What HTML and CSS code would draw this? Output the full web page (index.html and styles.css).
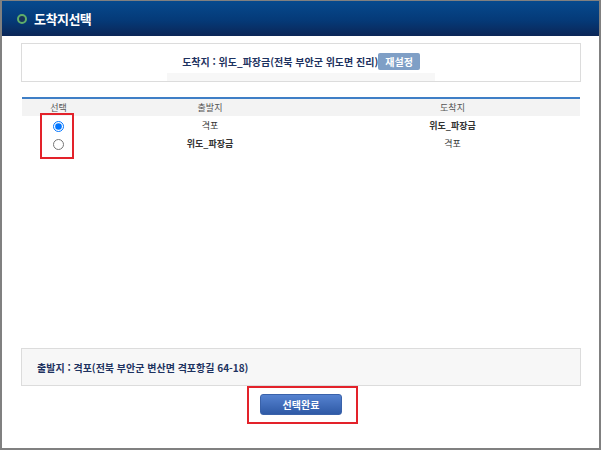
FILE: index.html
```html
<!DOCTYPE html>
<html lang="ko">
<head>
    <meta charset="UTF-8">
    <title>도착지선택</title>
    <link rel="stylesheet" href="styles.css">
</head>
<body>
    <div class="window">
        <div class="header">
            <span class="header-icon"></span>
            <h1>도착지선택</h1>
        </div>
        <div class="content">
            <div class="dest-box">
                <div class="dest-line">
                    <span class="dest-text">도착지 : 위도_파장금(전북 부안군 위도면 진리)</span>
                    <button class="btn-reset" type="button">재설정</button>
                </div>
                <div class="dest-strip"></div>
            </div>

            <div class="list">
                <table class="route-table">
                    <colgroup>
                        <col class="col-check">
                        <col class="col-from">
                        <col class="col-to">
                    </colgroup>
                    <thead>
                        <tr>
                            <th>선택</th>
                            <th>출발지</th>
                            <th>도착지</th>
                        </tr>
                    </thead>
                    <tbody>
                        <tr>
                            <td><input type="radio" name="route" checked></td>
                            <td>격포</td>
                            <td class="strong">위도_파장금</td>
                        </tr>
                        <tr>
                            <td><input type="radio" name="route"></td>
                            <td class="strong">위도_파장금</td>
                            <td>격포</td>
                        </tr>
                    </tbody>
                </table>
                <div class="mark mark-radio"></div>
            </div>

            <div class="start-box">출발지 : 격포(전북 부안군 변산면 격포항길 64-18)</div>

            <div class="actions">
                <button class="btn-done" type="button">선택완료</button>
                <div class="mark mark-done"></div>
            </div>
        </div>
    </div>
</body>
</html>
```

FILE: styles.css
```css
body {
    margin: 0;
    padding: 0;
    font-family: "Noto Sans CJK KR", "Noto Sans", sans-serif;
    color: #333;
}
.window {
    width: 601px;
    height: 450px;
    box-sizing: border-box;
    border: 2px solid #808080;
    border-top-width: 1px;
    background-color: #fff;
}
.header {
    height: 35px;
    display: flex;
    align-items: center;
    padding-left: 15px;
    background: linear-gradient(to bottom, #064a8e 0%, #053a78 55%, #0b2657 100%);
}
.header-icon {
    width: 6px;
    height: 6px;
    border: 2px solid #5fae6a;
    border-radius: 50%;
    background-color: #17345a;
}
.header h1 {
    margin: 0 0 0 7px;
    font-size: 13px;
    font-weight: bold;
    color: #fff;
    letter-spacing: -0.5px;
}
.content {
    padding: 7px 18px 0 19px;
}
.dest-box {
    height: 37px;
    border: 1px solid #dcdcdc;
    display: flex;
    flex-direction: column;
    align-items: center;
}
.dest-line {
    display: flex;
    align-items: center;
    margin-top: 9px;
}
.dest-text {
    font-size: 10px;
    font-weight: bold;
    color: #1d3260;
}
.btn-reset {
    height: 17px;
    padding: 0 7px;
    border: none;
    border-radius: 2px;
    background-color: #7f9fc6;
    color: #fff;
    font-family: inherit;
    font-size: 10px;
    font-weight: bold;
}
.dest-strip {
    margin-top: 3px;
    width: 268px;
    height: 8px;
    background-color: #f7f7f7;
}
.list {
    position: relative;
    height: 251px;
    margin: 15px 1px 0;
}
.route-table {
    width: 100%;
    border-collapse: collapse;
    border-top: 2px solid #3f7fc6;
    table-layout: fixed;
    font-size: 9px;
}
.col-check { width: 73px; }
.col-from { width: 230px; }
.route-table th {
    height: 17px;
    padding: 0;
    background-color: #f3f3f3;
    font-weight: normal;
    color: #555;
}
.route-table td {
    height: 18px;
    padding: 0;
    text-align: center;
    color: #333;
}
.route-table td.strong {
    font-weight: bold;
}
.route-table input[type="radio"] {
    margin: 0;
    width: 11px;
    height: 11px;
    vertical-align: middle;
}
.mark {
    position: absolute;
    border: 2px solid #e3222a;
    box-sizing: border-box;
}
.mark-radio {
    left: 18px;
    top: 16px;
    width: 34px;
    height: 46px;
}
.start-box {
    height: 36px;
    display: flex;
    align-items: center;
    padding-left: 15px;
    border: 1px solid #dcdcdc;
    background-color: #f7f7f7;
    font-size: 10px;
    font-weight: bold;
    color: #1d3260;
}
.actions {
    position: relative;
    display: flex;
    justify-content: center;
    padding-top: 8px;
}
.btn-done {
    width: 82px;
    height: 21px;
    border: 1px solid #3a62aa;
    border-radius: 3px;
    background: linear-gradient(to bottom, #5582d0, #2f5aa6);
    color: #fff;
    font-family: inherit;
    font-size: 10px;
    font-weight: bold;
}
.mark-done {
    left: 226px;
    top: 0;
    width: 111px;
    height: 38px;
}
```
